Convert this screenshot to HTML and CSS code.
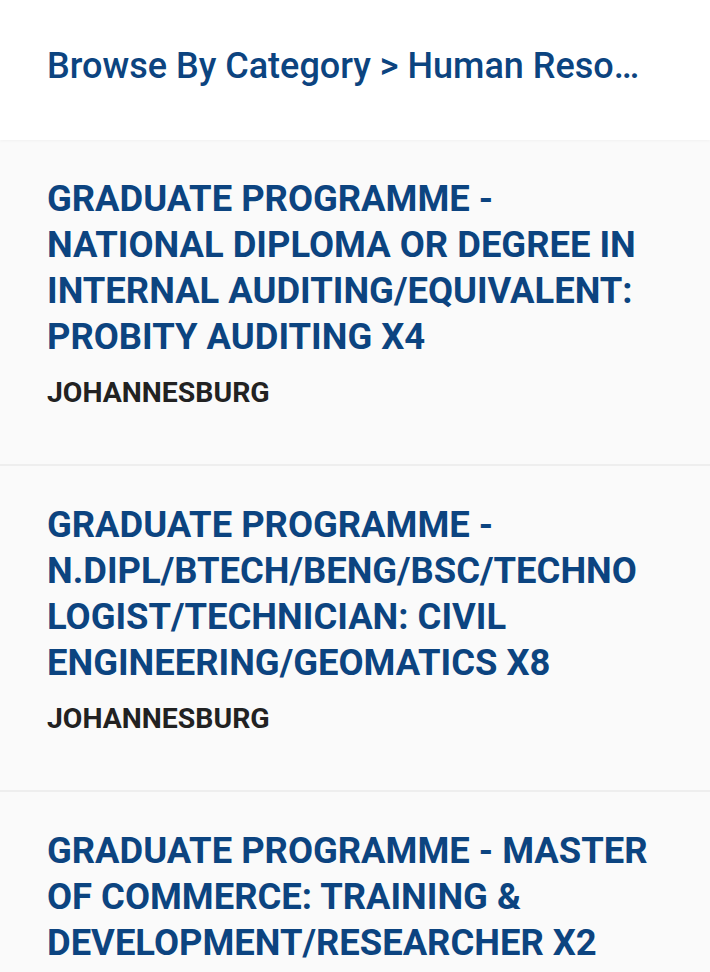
FILE: index.html
```html
<!DOCTYPE html>
<html>
<head>
<meta charset="utf-8">
<link rel="stylesheet" href="styles.css">
</head>
<body>
<header class="topbar">
  <div class="crumb">Browse By Category &gt; Human Resources &amp; Training</div>
</header>
<main class="list">
  <article class="job">
    <h2 class="job-title">GRADUATE PROGRAMME - NATIONAL DIPLOMA OR DEGREE IN INTERNAL AUDITING/&#8288;EQUIVALENT: PROBITY AUDITING X4</h2>
    <div class="job-loc">JOHANNESBURG</div>
  </article>
  <article class="job">
    <h2 class="job-title">GRADUATE PROGRAMME - N.DIPL/&#8288;BTECH/&#8288;BENG/&#8288;BSC/&#8288;TECHNOLOGIST/&#8288;TECHNICIAN: CIVIL ENGINEERING/&#8288;GEOMATICS X8</h2>
    <div class="job-loc">JOHANNESBURG</div>
  </article>
  <article class="job">
    <h2 class="job-title">GRADUATE PROGRAMME - MASTER OF COMMERCE: TRAINING &amp; DEVELOPMENT/&#8288;RESEARCHER X2</h2>
    <div class="job-loc">JOHANNESBURG</div>
  </article>
</main>
</body>
</html>
```
FILE: styles.css
```css
html, body {
  margin: 0;
  padding: 0;
}
body {
  font-family: Roboto, "Liberation Sans", sans-serif;
  background: #fafafa;
  width: 710px;
  overflow-x: hidden;
}
.topbar {
  background: #ffffff;
  height: 140px;
  box-sizing: border-box;
  padding: 0 47px;
  display: flex;
  align-items: center;
  box-shadow: 0 1px 3px rgba(0,0,0,0.04);
  position: relative;
  z-index: 1;
}
.crumb {
  color: #0c4480;
  font-size: 36px;
  font-weight: 500;
  line-height: 42px;
  white-space: nowrap;
  overflow: hidden;
  text-overflow: ellipsis;
  max-width: 600px;
  margin-top: -8px;
}
.list {
  background: #fafafa;
}
.job {
  padding: 36px 60px 53px 47px;
  border-bottom: 2px solid #eeeeee;
}
.job-title {
  margin: 0;
  color: #0c4480;
  font-size: 36.4px;
  font-weight: 700;
  line-height: 46px;
  overflow-wrap: anywhere;
}
.job-loc {
  margin-top: 15px;
  color: #222222;
  font-size: 28.4px;
  font-weight: 700;
  line-height: 36px;
}
```
